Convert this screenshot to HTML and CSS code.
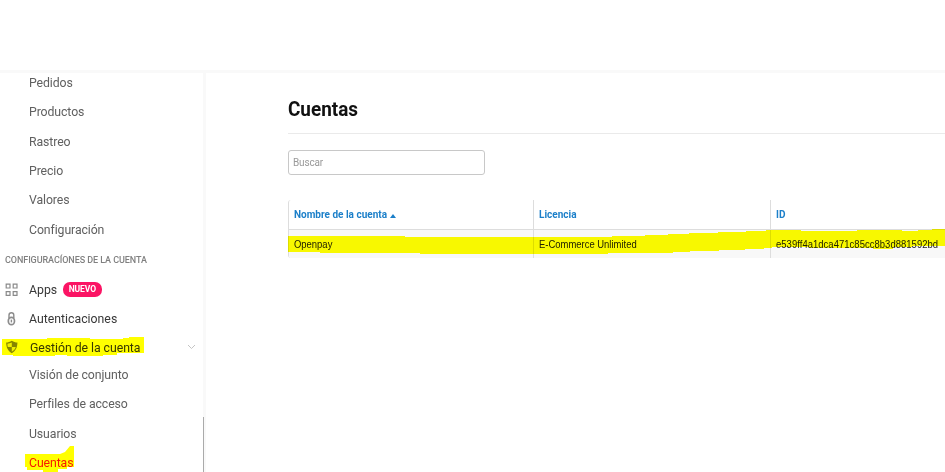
FILE: index.html
```html
<!DOCTYPE html>
<html lang="es">
<head>
<meta charset="utf-8">
<title>Cuentas</title>
<link rel="stylesheet" href="styles.css">
</head>
<body>
<header class="topbar"></header>
<div class="layout">
  <aside class="sidebar">
    <nav>
      <ul class="menu">
        <li>Pedidos</li>
        <li>Productos</li>
        <li>Rastreo</li>
        <li>Precio</li>
        <li>Valores</li>
        <li>Configuración</li>
      </ul>
      <h2 class="section">CONFIGURACÍONES DE LA CUENTA</h2>
      <ul class="groups">
        <li>
          <svg class="icon" width="14" height="14" viewBox="0 0 14 14" fill="none" stroke="#8a8a8a" stroke-width="1.2"><path d="M1.200 1.200h3.800v3.800h-3.800zM8.200 1.200h3.800v3.800h-3.800zM1.200 8.600h3.800v3.800h-3.800zM8.200 8.600h3.800v3.800h-3.800z"/></svg>
          <span class="narrow">Apps</span><span class="badge">NUEVO</span>
        </li>
        <li>
          <svg class="icon" width="14" height="14" viewBox="0 0 14 14" fill="none" stroke="#8c8c8c"><path stroke-width="1.4" d="M4 6V3.200a2.400 2.400 0 0 1 4.800 0V6"/><ellipse cx="6.400" cy="9" rx="3.100" ry="3.700" stroke-width="1.700"/><path stroke-width="1.400" d="M6.400 7.600v2.800"/></svg>
          <span class="narrow">Autenticaciones</span>
        </li>
        <li class="open">
          <svg class="icon" width="14" height="14" viewBox="0 0 14 14"><path d="M6.800.8C5 2 3 2.500 1.200 2.600c0 4.800 1.600 8.400 5.600 10.600 4-2.200 5.600-5.800 5.600-10.600C10.600 2.500 8.600 2 6.800.8z" fill="#858585"/><path d="M6.800 2.500v4.600H2.800C2.500 6 2.400 4.800 2.400 3.700 4 3.500 5.400 3.200 6.800 2.500zM6.800 7.100h4c-.7 2-2 3.600-4 4.700z" fill="#eee"/></svg>
          <span class="narrow account">Gestión de la cuenta</span>
          <svg class="chevron" width="9" height="6" viewBox="0 0 9 6" fill="none" stroke="#c4c4c4"><path d="M1 1l3.500 3.500L8 1"/></svg>
        </li>
      </ul>
      <ul class="menu sub">
        <li>Visión de conjunto</li>
        <li>Perfiles de acceso</li>
        <li>Usuarios</li>
        <li class="current">Cuentas</li>
      </ul>
    </nav>
    <div class="scrollbar"></div>
  </aside>
  <main class="content">
    <h1><span class="narrow">Cuentas</span></h1>
    <input class="search" type="text" placeholder="Buscar">
    <div class="table">
      <div class="row head">
        <div>Nombre de la cuenta<i class="sort"></i></div>
        <div>Licencia</div>
        <div>ID</div>
      </div>
      <div class="row data">
        <div><span class="narrow">Openpay</span></div>
        <div><span class="narrow">E-Commerce Unlimited</span></div>
        <div><span class="narrow id">e539ff4a1dca471c85cc8b3d881592bd</span></div>
      </div>
    </div>
  </main>
</div>
<svg class="marker" width="945" height="472" viewBox="0 0 945 472" fill="#ff0">
  <path d="M2 339H47V338H90V339H123V338H129V337H144V353H117V355H103V356H67V355H55V356H13V355H2z"/>
  <path d="M25 454H60L65 452L70 446H74V467H67V469H58V472H43V470H27V467H25z"/>
  <path d="M288 236H405V237H612V236H645V235H668V234H689V233H718V232H746V231H766V230H801V231H857V230H902V231H918V230H932V229H945V246H912V247H893V249H873V248H809V247H772V248H764V249H745V250H719V251H690V252H673V253H608V254H420V253H320V252H288z"/>
</svg>
</body>
</html>
```

FILE: styles.css
```css
* { box-sizing: border-box; }
body {
  margin: 0;
  height: 472px;
  overflow: hidden;
  background: #fff;
  color: #606060;
  font-family: Roboto, "Liberation Sans", sans-serif;
}
ul, h1, h2 { margin: 0; padding: 0; list-style: none; }
.narrow { display: inline-block; transform: scaleX(0.945); transform-origin: left; }
.topbar { height: 73px; border-bottom: 3px solid #f9f9f9; }
.layout { display: flex; height: 399px; }
.sidebar {
  display: flex;
  flex: none;
  width: 206px;
  border-right: 3px solid #f9f9f9;
}
nav { flex: none; width: 203px; margin-top: -5px; }
.menu li {
  height: 29.35px;
  padding-left: 29px;
  font-size: 13px;
  line-height: 29.35px;
  letter-spacing: -0.1px;
  white-space: nowrap;
  transform: scaleX(0.945);
  transform-origin: 29px 50%;
}
.sub { margin-top: -1px; }
.section {
  height: 31px;
  padding-left: 5px;
  font-size: 9px;
  font-weight: 500;
  line-height: 32px;
  letter-spacing: -0.07px;
  color: #808080;
  white-space: nowrap;
}
.groups li {
  display: flex;
  align-items: center;
  height: 29px;
  padding-left: 5px;
  font-size: 13px;
  color: #383838;
  white-space: nowrap;
}
.groups .open { height: 28px; }
.icon { flex: none; margin-right: 10px; }
.badge {
  width: 39px;
  height: 15px;
  margin-left: 4px;
  border-radius: 7px;
  background: #fb1464;
  color: #fff;
  font-size: 8.500px;
  font-weight: 700;
  line-height: 14px;
  letter-spacing: -0.1px;
  text-align: center;
}
.account { padding-left: 1px; letter-spacing: -0.05px; }
.chevron { margin-left: auto; margin-right: 7px; }
.menu .current { color: #f71963; }
.scrollbar { flex: none; width: 1px; height: 55px; margin: auto -1px 0 0; background: #aaa; }
.content { flex: 1; min-width: 0; padding: 24px 0 0 82px; }
h1 {
  height: 37px;
  border-bottom: 1px solid #eaeaea;
  color: #111;
  font-size: 20px;
  font-weight: 700;
  line-height: 24px;
}
.search {
  display: block;
  width: 197px;
  height: 25px;
  margin-top: 16px;
  padding: 0 4px;
  border: 1px solid #c8c8c8;
  border-radius: 3px;
  background: #fff;
  font: 10px Roboto, sans-serif;
  letter-spacing: -0.15px;
}
.search::placeholder { color: #999; }
.table { margin-top: 25px; border-left: 1px solid #ddd; border-radius: 3px 0 0 3px; overflow: hidden; }
.row { display: grid; grid-template-columns: 244px 237px 1fr; font-size: 10px; }
.row div { display: flex; align-items: center; padding-left: 5px; white-space: nowrap; }
.row div + div { border-left: 1px solid #ddd; }
.head { height: 30px; border-bottom: 1px solid #ddd; color: #1b7fc9; font-weight: 700; }
.data { height: 28px; background: #f8f8f8; color: #222; font-family: "Liberation Sans", sans-serif; }
.id { letter-spacing: 0.05px; }
.sort {
  margin: 3px 0 0 3px;
  border: 3px solid transparent;
  border-top: 0;
  border-bottom: 4px solid #1b7fc9;
}
.marker { position: absolute; top: 0; left: 0; mix-blend-mode: multiply; pointer-events: none; }
```
